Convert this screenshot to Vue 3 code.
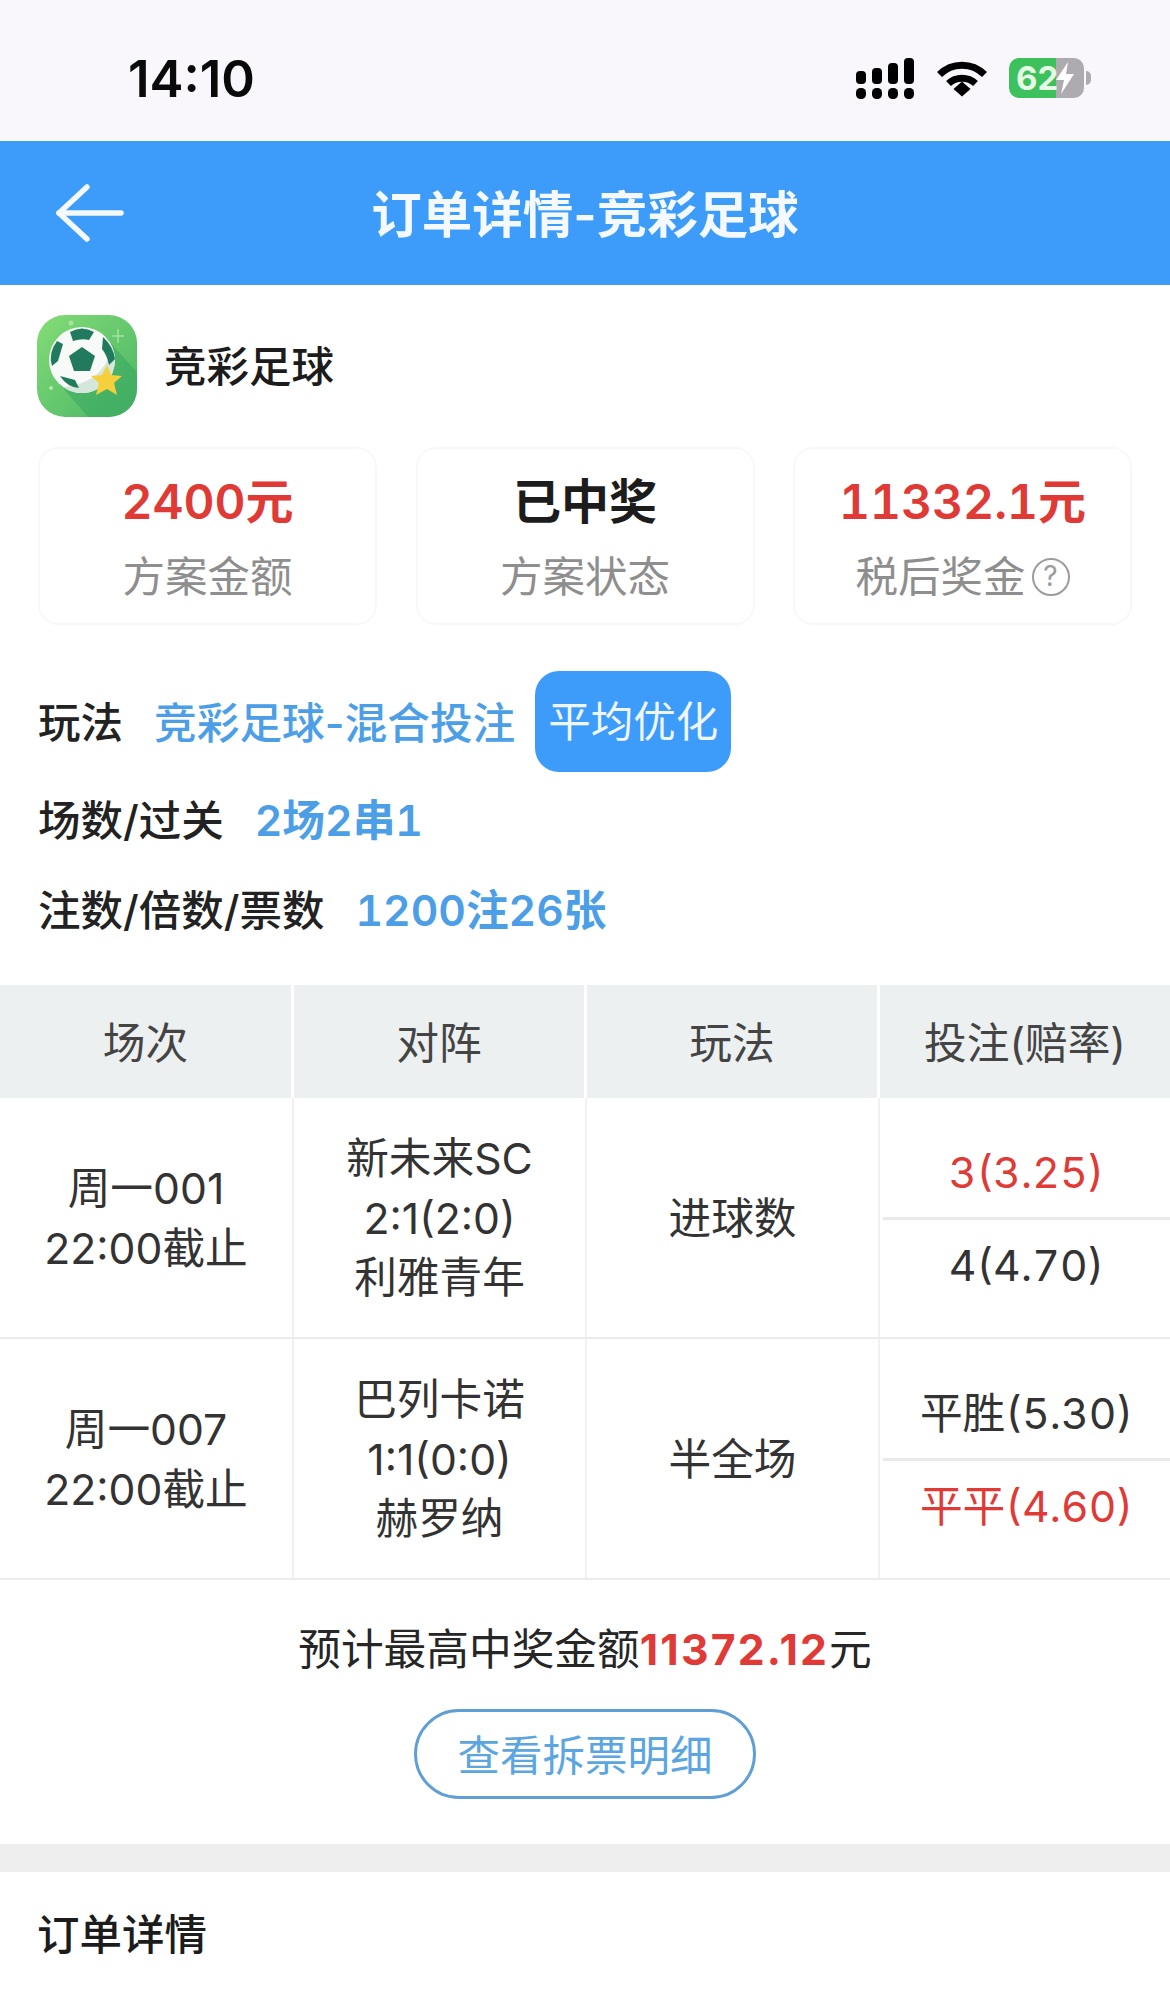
<script setup>
const cards = [
  { value: '2400元', label: '方案金额', red: true },
  { value: '已中奖', label: '方案状态', red: false },
  { value: '11332.1元', label: '税后奖金', red: true, help: true },
];

const headers = ['场次', '对阵', '玩法', '投注(赔率)'];

const matches = [
  {
    no: '周一001',
    time: '22:00截止',
    teams: ['新未来SC', '2:1(2:0)', '利雅青年'],
    play: '进球数',
    odds: [
      { text: '3(3.25)', hit: true },
      { text: '4(4.70)', hit: false },
    ],
  },
  {
    no: '周一007',
    time: '22:00截止',
    teams: ['巴列卡诺', '1:1(0:0)', '赫罗纳'],
    play: '半全场',
    odds: [
      { text: '平胜(5.30)', hit: false },
      { text: '平平(4.60)', hit: true },
    ],
  },
];
</script>

<template>
  <div class="page">
    <div class="status">
      <span class="time">14:10</span>
      <div class="status-icons">
        <svg class="signal" width="58" height="41" viewBox="0 0 58 41" fill="#000">
          <rect x="0" y="30" width="10" height="11" rx="4.5" />
          <rect x="16" y="30" width="10" height="11" rx="4.5" />
          <rect x="32" y="30" width="10" height="11" rx="4.5" />
          <rect x="48" y="30" width="10" height="11" rx="4.5" />
          <rect x="0" y="13" width="10" height="13" rx="4" />
          <rect x="16" y="10" width="10" height="16" rx="4" />
          <rect x="32" y="5" width="10" height="21" rx="4" />
          <rect x="48" y="0" width="10" height="26" rx="4" />
        </svg>
        <svg class="wifi" width="50" height="37" viewBox="0 0 50 37" fill="none" stroke="#000" stroke-width="7">
          <path d="M2.5 14.5C15 2 35 2 47.5 14.5" />
          <path d="M11.5 23.5C19 16.5 31 16.5 38.5 23.5" />
          <path d="M16.5 29L25 21.5L33.5 29L25 36.5Z" fill="#000" stroke="none" />
        </svg>
        <div class="battery">
          <div class="battery-body">
            <span class="battery-num">62</span>
            <svg class="bolt" width="20" height="32" viewBox="0 0 20 32" fill="#fff">
              <path d="M13 0L1 18H9L6 32L19 12H11Z" />
            </svg>
          </div>
          <span class="battery-nub"></span>
        </div>
      </div>
    </div>

    <div class="nav">
      <svg class="back" width="68" height="58" viewBox="0 0 68 58" fill="none" stroke="#f3f9ff" stroke-width="5.5" stroke-linecap="round" stroke-linejoin="round">
        <path d="M31 3L3 29L31 55" />
        <path d="M3 29H65" />
      </svg>
      <span class="nav-title">订单详情-竞彩足球</span>
    </div>

    <div class="brand">
      <svg class="logo" width="100" height="102" viewBox="0 0 100 102">
        <defs>
          <linearGradient id="logoBg" x1="0" y1="0" x2="1" y2="1">
            <stop offset="0" stop-color="#84dc76" />
            <stop offset="1" stop-color="#48b565" />
          </linearGradient>
          <clipPath id="logoClip">
            <rect width="100" height="102" rx="28" />
          </clipPath>
        </defs>
        <rect width="100" height="102" rx="28" fill="url(#logoBg)" />
        <path d="M20 66L68 22L110 68V110H58Z" fill="#33a45f" opacity="0.5" clip-path="url(#logoClip)" />
        <circle cx="45" cy="45" r="33" fill="#f7faf7" />
        <path d="M45 78A33 33 0 0 0 78 45A33 33 0 0 0 74 30C72 56 52 70 26 72A33 33 0 0 0 45 78Z" fill="#d5e6da" />
        <path d="M45 32L58 41L53 56H37L32 41Z" fill="#217a5d" />
        <path d="M33 17Q45 10 57 17L52 25Q45 23 36 26Z" fill="#217a5d" />
        <path d="M66 22Q76 31 78 44L72 50Q70 40 65 34Z" fill="#217a5d" />
        <path d="M20 26L26 29L21 46L15 51Q11 38 20 26Z" fill="#217a5d" />
        <path d="M23 61L38 65L42 73Q30 72 23 61Z" fill="#217a5d" />
        <path d="M70 50L74 60L85 61L77 68L80 80L70 74L59 80L62 68L54 61L65 60Z" fill="#f6cf3c" />
        <path d="M81 14V28M75 21H87" stroke="#bfeeb9" stroke-width="1" />
        <circle cx="34" cy="8" r="2.5" fill="#a6e49a" />
        <circle cx="14" cy="73" r="2" fill="#b3eaa6" />
      </svg>
      <span class="brand-name">竞彩足球</span>
    </div>

    <div class="cards">
      <div v-for="card in cards" :key="card.label" class="card">
        <div class="card-value" :class="{ red: card.red }">{{ card.value }}</div>
        <div class="card-label">
          {{ card.label }}
          <span v-if="card.help" class="help">?</span>
        </div>
      </div>
    </div>

    <div class="info">
      <div class="info-row first">
        <span class="info-label">玩法</span>
        <span class="info-value">竞彩足球-混合投注</span>
        <span class="tag">平均优化</span>
      </div>
      <div class="info-row">
        <span class="info-label">场数/过关</span>
        <span class="info-value num">2场2串1</span>
      </div>
      <div class="info-row">
        <span class="info-label">注数/倍数/票数</span>
        <span class="info-value num">1200注26张</span>
      </div>
    </div>

    <div class="table">
      <div class="thead">
        <div v-for="h in headers" :key="h" class="th">{{ h }}</div>
      </div>
      <div v-for="m in matches" :key="m.no" class="tr">
        <div class="td">
          <div>{{ m.no }}</div>
          <div>{{ m.time }}</div>
        </div>
        <div class="td">
          <div v-for="t in m.teams" :key="t">{{ t }}</div>
        </div>
        <div class="td">{{ m.play }}</div>
        <div class="td odds">
          <div v-for="o in m.odds" :key="o.text" class="odd" :class="{ red: o.hit }">{{ o.text }}</div>
        </div>
      </div>
    </div>

    <div class="summary">
      <div class="summary-text">预计最高中奖金额<b class="red">11372.12</b>元</div>
      <button class="detail-btn">查看拆票明细</button>
    </div>

    <div class="band"></div>

    <div class="section-title">订单详情</div>
  </div>
</template>

<style>
body {
  margin: 0;
  background: #fff;
}
</style>

<style scoped>
.page {
  width: 1170px;
  height: 2014px;
  overflow: hidden;
  background: #fff;
  font-family: Inter, "Noto Sans CJK SC", sans-serif;
  color: #2b2b2b;
}
.status {
  height: 141px;
  background: #faf7fc;
  display: flex;
  align-items: center;
  justify-content: space-between;
  padding: 15px 79px 0 128px;
  box-sizing: border-box;
}
.time {
  font-size: 51px;
  font-weight: 600;
  color: #0a0a0a;
}
.status-icons {
  display: flex;
  align-items: center;
}
.signal {
  margin-right: 23px;
}
.wifi {
  margin-right: 22px;
}
.battery {
  display: flex;
  align-items: center;
}
.battery-body {
  width: 75px;
  height: 40px;
  border-radius: 10px;
  background: linear-gradient(to right, #3cc15c 47px, #aeabb0 47px);
  display: flex;
  align-items: center;
  padding-left: 7px;
  box-sizing: border-box;
  position: relative;
}
.battery-num {
  font-size: 33px;
  font-weight: 700;
  color: #e6fae6;
  line-height: 40px;
}
.bolt {
  position: absolute;
  right: 9px;
  top: 4px;
}
.battery-nub {
  width: 5px;
  height: 14px;
  margin-left: 2px;
  background: #aeabb0;
  border-radius: 0 6px 6px 0;
}
.nav {
  height: 144px;
  background: #3d9bfa;
  display: flex;
  align-items: center;
  justify-content: center;
  position: relative;
}
.back {
  position: absolute;
  left: 56px;
  top: 43px;
}
.nav-title {
  font-size: 50.5px;
  font-weight: 600;
  color: #f3f9ff;
  margin-top: -4px;
}
.brand {
  display: flex;
  align-items: center;
  gap: 27px;
  padding: 30px 37px 0;
}
.brand-name {
  font-size: 42.5px;
  font-weight: 500;
  color: #1c1c1c;
  margin-top: -6px;
}
.cards {
  display: grid;
  grid-template-columns: repeat(3, 339px);
  gap: 38.5px;
  padding: 30px 38px 0;
}
.card {
  height: 178px;
  box-sizing: border-box;
  border: 2px solid #f8f8f8;
  border-radius: 20px;
  text-align: center;
  padding-top: 23px;
}
.card-value {
  font-size: 48px;
  font-weight: 600;
  line-height: 60px;
  color: #1c1c1c;
  font-variant-numeric: tabular-nums;
}
.card-label {
  font-size: 42.5px;
  line-height: 60px;
  margin-top: 15px;
  color: #8e8e8e;
  display: flex;
  align-items: center;
  justify-content: center;
  gap: 6px;
}
.help {
  width: 38px;
  height: 38px;
  box-sizing: border-box;
  border: 2px solid #9c9c9c;
  border-radius: 50%;
  font-size: 28px;
  line-height: 33px;
  color: #9c9c9c;
}
.info {
  padding: 46px 38px 0;
}
.info-row {
  display: flex;
  align-items: center;
  height: 90px;
}
.info-row.first {
  height: 101px;
}
.info-row.first .info-label,
.info-row.first .info-value {
  margin-top: -4px;
}
.info-label {
  font-size: 42.5px;
  font-weight: 500;
  color: #222;
  margin-right: 31px;
}
.info-value {
  font-size: 42.7px;
  font-weight: 500;
  color: #4c9fe6;
}
.info-value.num {
  font-weight: 600;
  font-variant-numeric: tabular-nums;
}
.tag {
  margin-left: 20px;
  width: 196px;
  height: 101px;
  border-radius: 24px;
  background: #3d9bfa;
  color: #eef6ff;
  font-size: 42.5px;
  line-height: 101px;
  text-align: center;
}
.table {
  margin-top: 33px;
}
.thead,
.tr {
  display: grid;
  grid-template-columns: 294px 293px 293px 290px;
}
.thead {
  height: 113px;
}
.th {
  background: #ecf0f1;
  border-right: 3px solid #fff;
  padding-bottom: 4px;
  display: flex;
  align-items: center;
  justify-content: center;
  font-size: 42.7px;
  color: #444;
}
.th:last-child {
  border-right: none;
}
.tr {
  height: 241px;
  box-sizing: border-box;
  border-bottom: 2px solid #ebebeb;
}
.td {
  display: flex;
  flex-direction: column;
  align-items: center;
  justify-content: center;
  border-right: 2px solid #f1f1f1;
  padding-top: 2px;
  font-size: 42.7px;
  line-height: 59.5px;
  color: #333;
}
.td:last-child {
  border-right: none;
}
.odds {
  padding: 28px 0 27px 3px;
  align-items: stretch;
  font-variant-numeric: tabular-nums;
}
.odd {
  flex: 1;
  padding-top: 2px;
  display: flex;
  align-items: center;
  justify-content: center;
}
.odd:first-child {
  border-bottom: 3px solid #e9e9e9;
}
.summary {
  height: 264px;
  display: flex;
  flex-direction: column;
  align-items: center;
  padding-top: 40px;
  box-sizing: border-box;
}
.summary-text {
  font-size: 42.7px;
  line-height: 60px;
  color: #262626;
}
.summary-text b {
  font-weight: 700;
  letter-spacing: 2.2px;
}
.detail-btn {
  margin-top: 29px;
  width: 342px;
  height: 90px;
  padding: 0 0 4px;
  border: 3px solid #5f9fd6;
  border-radius: 45px;
  background: #fff;
  color: #5ba6e0;
  font-family: inherit;
  font-size: 42.5px;
}
.band {
  height: 28px;
  background: #eeeeee;
}
.section-title {
  padding: 33px 37px 0;
  font-size: 42.5px;
  font-weight: 500;
  line-height: 60px;
  color: #1c1c1c;
}
.red {
  color: #e03a36;
}
</style>
